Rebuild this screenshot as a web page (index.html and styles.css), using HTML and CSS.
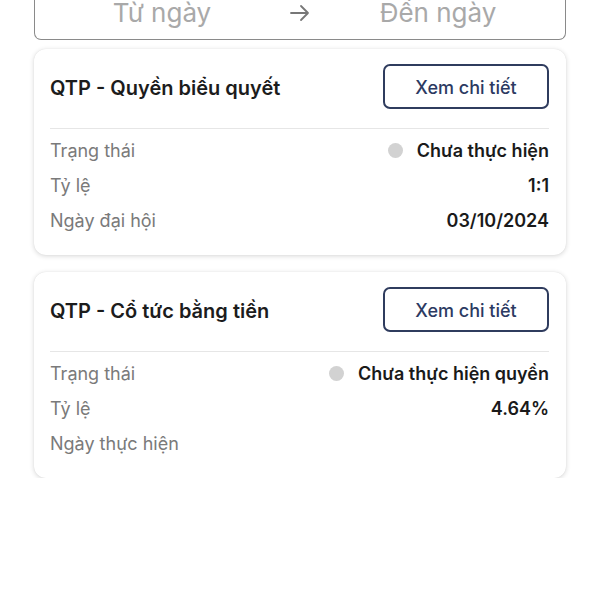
FILE: index.html
```html
<!DOCTYPE html>
<html lang="vi">
<head>
<meta charset="utf-8">
<link rel="stylesheet" href="styles.css">
</head>
<body>
<div class="page">
  <div class="date-range">
    <span class="date-field">Từ ngày</span>
    <span class="arrow">
      <svg width="22" height="18" viewBox="0 0 22 18"><path d="M2 9h17M12 2l7 7-7 7" fill="none" stroke="#777" stroke-width="1.8" stroke-linecap="round" stroke-linejoin="round"/></svg>
    </span>
    <span class="date-field">Đến ngày</span>
  </div>

  <div class="card">
    <div class="card-head">
      <div class="card-title">QTP - Quyền biểu quyết</div>
      <button class="btn">Xem chi tiết</button>
    </div>
    <div class="divider"></div>
    <div class="rows">
      <div class="row"><span class="label">Trạng thái</span><span class="value"><span class="dot"></span>Chưa thực hiện</span></div>
      <div class="row"><span class="label">Tỷ lệ</span><span class="value">1:1</span></div>
      <div class="row"><span class="label">Ngày đại hội</span><span class="value">03/10/2024</span></div>
    </div>
  </div>

  <div class="card">
    <div class="card-head">
      <div class="card-title">QTP - Cổ tức bằng tiền</div>
      <button class="btn">Xem chi tiết</button>
    </div>
    <div class="divider"></div>
    <div class="rows">
      <div class="row"><span class="label">Trạng thái</span><span class="value"><span class="dot"></span>Chưa thực hiện quyền</span></div>
      <div class="row"><span class="label">Tỷ lệ</span><span class="value">4.64%</span></div>
      <div class="row"><span class="label">Ngày thực hiện</span><span class="value"></span></div>
    </div>
  </div>
</div>
</body>
</html>
```

FILE: styles.css
```css
* { box-sizing: border-box; }
html, body { margin: 0; padding: 0; background: #fff; }
body { font-family: Inter, "Noto Sans", "Liberation Sans", sans-serif; color: #1a1a1a; }

.page {
  padding: 0 34px;
  display: flex;
  flex-direction: column;
  gap: 17px;
}

.date-range {
  margin-top: -13px;
  height: 53px;
  border: 1px solid #8a8a8a;
  border-top: none;
  border-radius: 0 0 7px 7px;
  display: grid;
  grid-template-columns: 1fr auto 1fr;
  align-items: center;
  padding-bottom: 1px;
  margin-bottom: -8px;
}
.date-field {
  font-size: 26px;
  color: #a9a9a9;
  font-weight: 400;
  text-align: center;
}
.arrow { display: flex; align-items: center; }

.card {
  background: #fff;
  border-radius: 12px;
  box-shadow: 0 1px 5px rgba(0,0,0,0.16), 0 0 1px rgba(0,0,0,0.1);
  padding: 15px 17px 18px 16px;
}
.card-head {
  display: flex;
  align-items: center;
  justify-content: space-between;
}
.card-title {
  font-size: 20px;
  font-weight: 600;
  color: #1c1c1c;
  padding-top: 2px;
}
.btn {
  width: 166px;
  height: 45px;
  border: 2px solid #2f3c5e;
  border-radius: 7px;
  background: #fff;
  color: #2c3a62;
  font-family: inherit;
  font-size: 18px;
  font-weight: 500;
  padding-top: 2px;
}
.divider {
  height: 1px;
  background: #e6e6e6;
  margin-top: 19px;
}
.rows { padding-top: 3px; }
.row {
  height: 35px;
  display: flex;
  align-items: center;
  justify-content: space-between;
  font-size: 18px;
  padding-top: 1px;
}
.label { color: #7a7a7a; }
.value {
  font-weight: 600;
  color: #1a1a1a;
  display: flex;
  align-items: center;
}
.dot {
  width: 15px;
  height: 15px;
  border-radius: 50%;
  background: #d2d2d2;
  margin-right: 14px;
}
```
